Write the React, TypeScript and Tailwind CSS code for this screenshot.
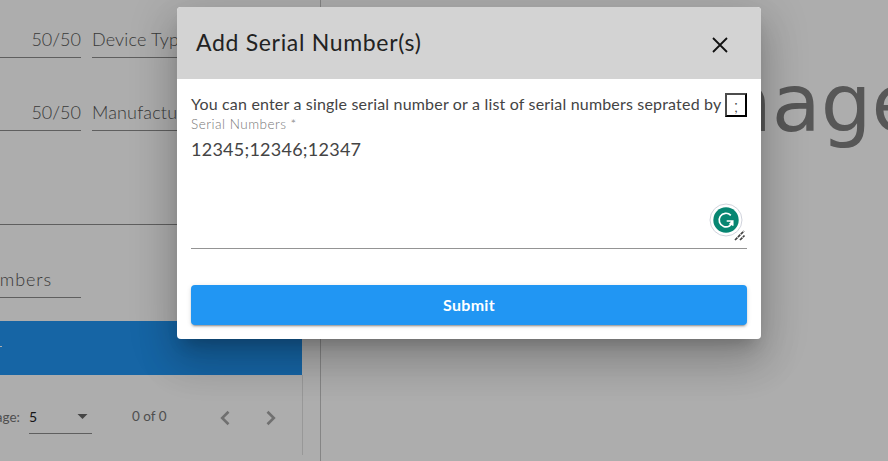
import { ReactNode } from "react";

interface FieldProps {
  children?: ReactNode;
  className?: string;
}

const Field = ({ children, className }: FieldProps) => {
  return (
    <div
      className={`flex items-end overflow-hidden whitespace-nowrap border-b border-[#8c8c8c] pb-[6px] text-lg font-light leading-6 text-[#555] ${className}`}
    >
      {children}
    </div>
  );
};

const Paginator = () => {
  return (
    <div className="flex h-[80px] w-[303px] items-center border-r border-[#e0e0e0] text-sm text-[#757575]">
      <div className="mt-[5px] flex w-5 shrink-0 justify-end whitespace-nowrap text-[13.5px]">
        Items per page:
      </div>
      <div className="ml-[9px] mt-[5px] flex h-[33px] w-[63px] shrink-0 items-center justify-between border-b border-[#8c8c8c]">
        <span className="text-[#222]">5</span>
        <svg className="-mt-[2px] mr-1 h-[5px] w-[11px]" viewBox="0 0 10 5">
          <path d="M0 0h10L5 5z" fill="#666" />
        </svg>
      </div>
      <span className="ml-10 mt-[3px] w-[79px] shrink-0 text-[13.5px]">0 of 0</span>
      <svg className="mt-[5px] h-[30px] w-7 shrink-0" viewBox="0 0 24 24" fill="#a6a6a6">
        <path d="M15.8 7.41L14.2 5.8l-6.2 6.2 6.2 6.2 1.6-1.61L11.2 12z" />
      </svg>
      <svg
        className="ml-[18px] mt-[5px] h-[30px] w-7 shrink-0"
        viewBox="0 0 24 24"
        fill="#a6a6a6"
      >
        <path d="M9.8 5.8L8.2 7.41 12.8 12l-4.6 4.59 1.6 1.61L16 12z" />
      </svg>
    </div>
  );
};

const Sidebar = () => {
  return (
    <div className="h-full w-[321px] shrink-0 overflow-hidden border-r border-[#c4c4c4]">
      <div className="flex h-[58px] gap-[11px]">
        <Field className="w-[81px] justify-end">50/50</Field>
        <Field className="w-[210px] tracking-[0.15px]">Device Type</Field>
      </div>
      <div className="flex h-[73px] gap-[11px]">
        <Field className="w-[81px] justify-end">50/50</Field>
        <Field className="w-[210px] tracking-[0.15px]">Manufacturer</Field>
      </div>
      <Field className="h-[94px] w-[302px]" />
      <div className="flex h-[73px] w-[81px]">
        <Field className="w-[81px] justify-end pr-[29px] tracking-[0.9px]">
          Serial Numbers
        </Field>
      </div>
      <div className="mt-[23px] flex h-[54px] w-[302px] items-center bg-[#2196f3]">
        <span className="mb-1 h-px w-[2px] bg-white" />
      </div>
      <Paginator />
    </div>
  );
};

const Dialog = () => {
  return (
    <div className="absolute left-[177px] top-[7px] flex h-[332px] w-[584px] flex-col overflow-hidden rounded bg-white">
      <div className="flex h-[72px] shrink-0 items-center justify-between bg-[#d3d3d3] pl-[19px] pr-[33px]">
        <h2 className="-mt-px text-[23px] tracking-[0.68px] text-[#222]">
          Add Serial Number(s)
        </h2>
        <svg className="mt-[3px] h-4 w-4" viewBox="0 0 16 16" stroke="#111" strokeWidth="1.8">
          <path d="M1 1l14 14M15 1L1 15" />
        </svg>
      </div>
      <div className="flex flex-col px-[14px] pt-[14px]">
        <div className="flex h-6 items-center justify-between whitespace-nowrap text-[#444]">
          <span className="-mt-[2px] text-base tracking-[0.18px]">
            You can enter a single serial number or a list of serial numbers seprated by
          </span>
          <span className="flex h-6 w-[22px] items-center justify-center border-2 border-b-black border-l-[#4c4c4c] border-r-black border-t-[#4c4c4c] text-lg font-light">
            ;
          </span>
        </div>
        <label className="h-[15px] text-[13.5px] font-light leading-[15px] tracking-[0.5px] text-[#777]">
          Serial Numbers *
        </label>
        <div className="flex h-[117px] justify-between border-b border-[#949494]">
          <span className="mt-[5px] text-lg leading-6 tracking-[0.25px] text-[#444]">
            12345;12346;12347
          </span>
          <div className="flex w-[38px] flex-col pt-[71px]">
            <svg className="h-[34px] w-[34px]" viewBox="0 0 34 34" fill="none">
              <circle cx="17" cy="17" r="16" fill="#fff" stroke="#d0d3dc" />
              <circle cx="17" cy="17" r="12.7" fill="#078672" />
              <path
                d="M21.8 12.3a6.8 6.8 0 1 0 1.9 5.7h-6M23.7 18v4.7M20.5 21.5l3.2-3.5"
                stroke="#fff"
                strokeWidth="1.7"
              />
            </svg>
            <svg
              className="-mt-[7px] ml-[25px] h-[11px] w-[12px]"
              viewBox="0 0 12 11"
              stroke="#444"
              strokeWidth="1.7"
              strokeDasharray="3.4 0.7"
            >
              <path d="M1 10l9-9M6 10l4.5-4.5" />
            </svg>
          </div>
        </div>
        <button className="mt-[36px] h-10 rounded bg-[#2196f3] text-base font-bold tracking-[0.3px] text-white shadow-[0_3px_1px_-2px_rgba(0,0,0,0.2),0_2px_2px_0_rgba(0,0,0,0.14),0_1px_5px_0_rgba(0,0,0,0.12)]">
          Submit
        </button>
      </div>
    </div>
  );
};

const App = () => {
  return (
    <div className="relative h-[461px] w-[888px] overflow-hidden bg-white font-['Lato',sans-serif]">
      <div className="flex h-full">
        <Sidebar />
        <div className="min-w-0 flex-1 overflow-hidden whitespace-nowrap pl-[282px] pt-[54px] font-['DejaVu_Sans',sans-serif] text-[80px] leading-[100px] text-[#808080]">
          Manage
        </div>
      </div>
      <div className="absolute inset-0 bg-black/[0.32]" />
      <div className="absolute left-[177px] top-[7px] h-[332px] w-[584px] rounded shadow-[0_11px_15px_-7px_rgba(0,0,0,0.2),0_24px_38px_3px_rgba(0,0,0,0.14),0_9px_46px_8px_rgba(0,0,0,0.12)]" />
      <Dialog />
    </div>
  );
};

export default App;
